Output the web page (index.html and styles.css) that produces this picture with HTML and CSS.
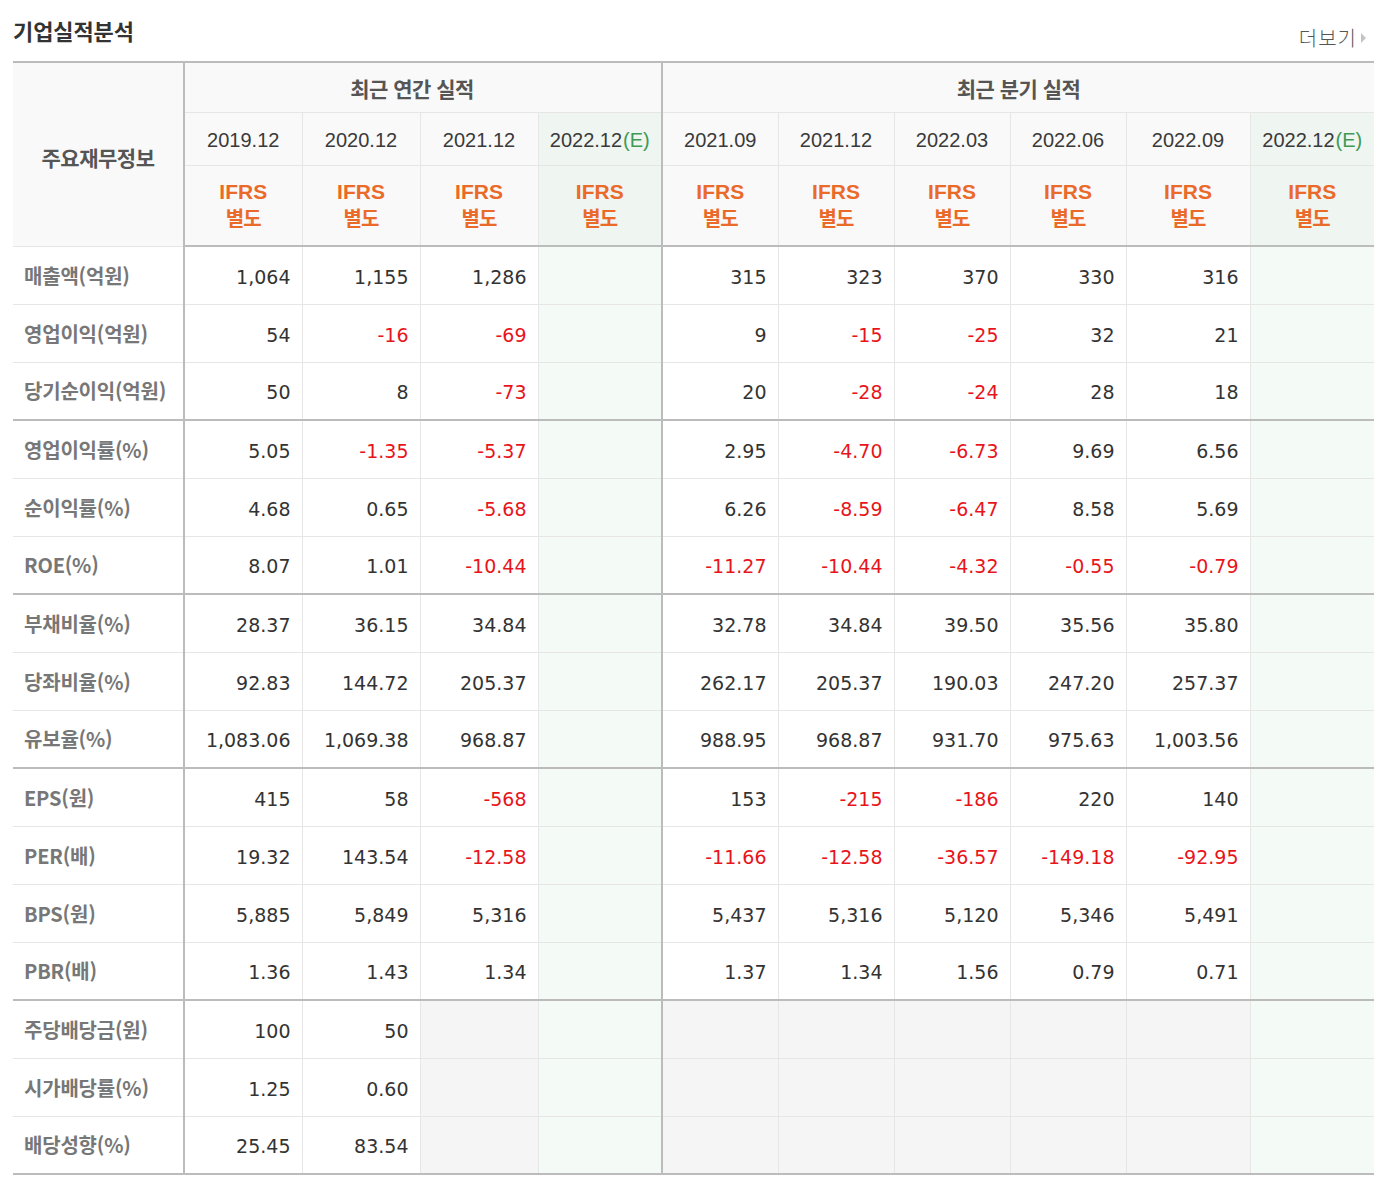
FILE: index.html
```html
<!DOCTYPE html>
<html lang="ko">
<head>
<meta charset="utf-8">
<title>기업실적분석</title>
<link rel="stylesheet" href="styles.css">
</head>
<body>
<div class="wrap">
  <div class="head">
    <h2 class="title">기업실적분석</h2>
    <a class="more">더보기<span class="tri"></span></a>
  </div>
  <table class="perf">
    <colgroup>
      <col class="c-lab"><col class="c-y"><col class="c-y"><col class="c-y"><col class="c-e">
      <col class="c-q"><col class="c-q"><col class="c-q"><col class="c-q"><col class="c-e"><col class="c-e">
    </colgroup>
    <thead>
      <tr class="h1">
        <th rowspan="3" class="lab-h sep-r">주요재무정보</th>
        <th colspan="4" class="grp grp-y sep-r">최근 연간 실적</th>
        <th colspan="6" class="grp">최근 분기 실적</th>
      </tr>
      <tr class="h2">
        <th>2019.12</th><th>2020.12</th><th>2021.12</th><th class="est sep-r">2022.12<span class="e">(E)</span></th>
        <th>2021.09</th><th>2021.12</th><th>2022.03</th><th>2022.06</th><th>2022.09</th><th class="est">2022.12<span class="e">(E)</span></th>
      </tr>
      <tr class="h3">
        <th><span class="ifrs">IFRS</span><span class="bd">별도</span></th>
        <th><span class="ifrs">IFRS</span><span class="bd">별도</span></th>
        <th><span class="ifrs">IFRS</span><span class="bd">별도</span></th>
        <th class="est sep-r"><span class="ifrs">IFRS</span><span class="bd">별도</span></th>
        <th><span class="ifrs">IFRS</span><span class="bd">별도</span></th>
        <th><span class="ifrs">IFRS</span><span class="bd">별도</span></th>
        <th><span class="ifrs">IFRS</span><span class="bd">별도</span></th>
        <th><span class="ifrs">IFRS</span><span class="bd">별도</span></th>
        <th><span class="ifrs">IFRS</span><span class="bd">별도</span></th>
        <th class="est"><span class="ifrs">IFRS</span><span class="bd">별도</span></th>
      </tr>
    </thead>
    <tbody>
      <tr><th class="sep-r">매출액(억원)</th><td>1,064</td><td>1,155</td><td>1,286</td><td class="est sep-r"></td><td>315</td><td>323</td><td>370</td><td>330</td><td>316</td><td class="est"></td></tr>
      <tr><th class="sep-r">영업이익(억원)</th><td>54</td><td class="neg">-16</td><td class="neg">-69</td><td class="est sep-r"></td><td>9</td><td class="neg">-15</td><td class="neg">-25</td><td>32</td><td>21</td><td class="est"></td></tr>
      <tr class="gend"><th class="sep-r">당기순이익(억원)</th><td>50</td><td>8</td><td class="neg">-73</td><td class="est sep-r"></td><td>20</td><td class="neg">-28</td><td class="neg">-24</td><td>28</td><td>18</td><td class="est"></td></tr>
      <tr><th class="sep-r">영업이익률(%)</th><td>5.05</td><td class="neg">-1.35</td><td class="neg">-5.37</td><td class="est sep-r"></td><td>2.95</td><td class="neg">-4.70</td><td class="neg">-6.73</td><td>9.69</td><td>6.56</td><td class="est"></td></tr>
      <tr><th class="sep-r">순이익률(%)</th><td>4.68</td><td>0.65</td><td class="neg">-5.68</td><td class="est sep-r"></td><td>6.26</td><td class="neg">-8.59</td><td class="neg">-6.47</td><td>8.58</td><td>5.69</td><td class="est"></td></tr>
      <tr class="gend"><th class="sep-r">ROE(%)</th><td>8.07</td><td>1.01</td><td class="neg">-10.44</td><td class="est sep-r"></td><td class="neg">-11.27</td><td class="neg">-10.44</td><td class="neg">-4.32</td><td class="neg">-0.55</td><td class="neg">-0.79</td><td class="est"></td></tr>
      <tr><th class="sep-r">부채비율(%)</th><td>28.37</td><td>36.15</td><td>34.84</td><td class="est sep-r"></td><td>32.78</td><td>34.84</td><td>39.50</td><td>35.56</td><td>35.80</td><td class="est"></td></tr>
      <tr><th class="sep-r">당좌비율(%)</th><td>92.83</td><td>144.72</td><td>205.37</td><td class="est sep-r"></td><td>262.17</td><td>205.37</td><td>190.03</td><td>247.20</td><td>257.37</td><td class="est"></td></tr>
      <tr class="gend"><th class="sep-r">유보율(%)</th><td>1,083.06</td><td>1,069.38</td><td>968.87</td><td class="est sep-r"></td><td>988.95</td><td>968.87</td><td>931.70</td><td>975.63</td><td>1,003.56</td><td class="est"></td></tr>
      <tr><th class="sep-r">EPS(원)</th><td>415</td><td>58</td><td class="neg">-568</td><td class="est sep-r"></td><td>153</td><td class="neg">-215</td><td class="neg">-186</td><td>220</td><td>140</td><td class="est"></td></tr>
      <tr><th class="sep-r">PER(배)</th><td>19.32</td><td>143.54</td><td class="neg">-12.58</td><td class="est sep-r"></td><td class="neg">-11.66</td><td class="neg">-12.58</td><td class="neg">-36.57</td><td class="neg">-149.18</td><td class="neg">-92.95</td><td class="est"></td></tr>
      <tr><th class="sep-r">BPS(원)</th><td>5,885</td><td>5,849</td><td>5,316</td><td class="est sep-r"></td><td>5,437</td><td>5,316</td><td>5,120</td><td>5,346</td><td>5,491</td><td class="est"></td></tr>
      <tr class="gend"><th class="sep-r">PBR(배)</th><td>1.36</td><td>1.43</td><td>1.34</td><td class="est sep-r"></td><td>1.37</td><td>1.34</td><td>1.56</td><td>0.79</td><td>0.71</td><td class="est"></td></tr>
      <tr><th class="sep-r">주당배당금(원)</th><td>100</td><td>50</td><td class="na"></td><td class="est sep-r"></td><td class="na"></td><td class="na"></td><td class="na"></td><td class="na"></td><td class="na"></td><td class="est"></td></tr>
      <tr><th class="sep-r">시가배당률(%)</th><td>1.25</td><td>0.60</td><td class="na"></td><td class="est sep-r"></td><td class="na"></td><td class="na"></td><td class="na"></td><td class="na"></td><td class="na"></td><td class="est"></td></tr>
      <tr class="gend"><th class="sep-r">배당성향(%)</th><td>25.45</td><td>83.54</td><td class="na"></td><td class="est sep-r"></td><td class="na"></td><td class="na"></td><td class="na"></td><td class="na"></td><td class="na"></td><td class="est"></td></tr>
    </tbody>
  </table>
</div>
</body>
</html>
```
FILE: styles.css
```css
html, body {
  margin: 0;
  padding: 0;
  background: #fff;
}
body {
  font-family: "Liberation Sans", "Noto Sans CJK KR", sans-serif;
  color: #333;
}
.wrap {
  padding: 0 10px 0 13px;
  width: 1361px;
}
.head {
  display: flex;
  justify-content: space-between;
  align-items: flex-end;
  height: 61px;
}
.title {
  margin: 0;
  align-self: flex-start;
  padding-top: 15px;
  font-family: "Noto Sans CJK KR", sans-serif;
  font-size: 22px;
  line-height: 30px;
  font-weight: 700;
  color: #333;
  letter-spacing: -0.1px;
}
.more {
  display: flex;
  align-items: center;
  margin-bottom: 10px;
  margin-right: 8px;
  font-family: "Noto Sans CJK KR", sans-serif;
  font-size: 20px;
  font-weight: 300;
  line-height: 26px;
  color: #555;
  letter-spacing: 1px;
}
.tri {
  display: inline-block;
  width: 0;
  height: 0;
  margin-left: 4px;
  border-left: 5px solid #c4c4c4;
  border-top: 5px solid transparent;
  border-bottom: 5px solid transparent;
}
.perf {
  border-collapse: collapse;
  table-layout: fixed;
  width: 1361px;
  border-top: 2px solid #bcbcbc;
  border-bottom: 2px solid #bcbcbc;
}
.c-lab { width: 171px; }
.c-y { width: 118px; }
.c-q { width: 116px; }
.c-e { width: 124px; }
.perf th, .perf td {
  border: 1px solid #e6e6e6;
  padding: 0;
}
.perf tr > *:first-child { border-left: none; }
.perf tr > *:last-child { border-right: none; }
.perf thead th {
  background: #f9f9f9;
  font-weight: 400;
  text-align: center;
}
.perf thead .est { background: #eff5f0; }
.perf .h1 th { height: 48px; padding-top: 1px; }
.perf .h2 th { height: 50px; padding-top: 2px; }
.perf .h3 th { height: 79px; }
.perf thead .lab-h, .perf thead .grp {
  font-family: "Noto Sans CJK KR", sans-serif;
  font-size: 21px;
  font-weight: 700;
  color: #555;
  letter-spacing: -0.5px;
}
.perf thead .lab-h { padding-top: 6px; }
.perf thead .grp-y { padding-right: 22px; }
.perf .h2 th {
  font-family: "Liberation Sans", sans-serif;
  font-size: 20px;
  color: #3a3a3a;
  font-weight: 400;
}
.e { color: #3f9a55; margin-left: 1px; }
.ifrs, .bd {
  display: block;
  color: #ea6a2a;
  font-weight: 700;
}
.ifrs {
  font-family: "Liberation Sans", sans-serif;
  font-size: 21px;
  line-height: 24px;
}
.bd {
  font-family: "Noto Sans CJK KR", sans-serif;
  font-size: 20px;
  line-height: 28px;
  letter-spacing: -1px;
}
.perf thead tr.h3 th { border-bottom: 2px solid #bcbcbc; }
.perf .sep-r { border-right: 2px solid #bcbcbc; }
.perf tbody th {
  height: 57px;
  text-align: left;
  padding-left: 11px;
  font-family: "Noto Sans CJK KR", sans-serif;
  font-size: 20px;
  font-weight: 700;
  color: #777;
  letter-spacing: -0.2px;
  background: #fff;
}
.perf tbody tr.gend th { height: 56px; }
.perf tbody td {
  text-align: right;
  padding-right: 11px;
  padding-top: 3px;
  font-family: "DejaVu Sans", "Liberation Sans", sans-serif;
  font-size: 19px;
  color: #333;
  background: #fff;
}
.perf tbody td.neg { color: #e8141b; }
.perf tbody td.est { background: #f4faf6; }
.perf tbody td.na { background: #f5f5f5; }
.perf tbody tr.gend > * { border-bottom: 2px solid #bcbcbc; }
```
